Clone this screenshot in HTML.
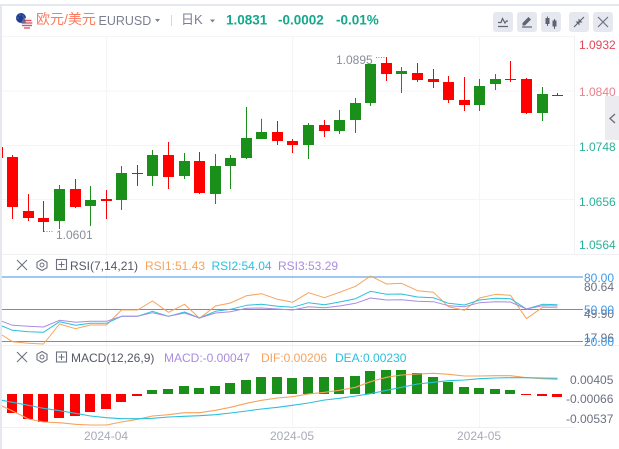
<!DOCTYPE html>
<html><head><meta charset="utf-8"><style>
html,body{margin:0;padding:0;background:#fff;width:619px;height:449px;overflow:hidden}
svg{display:block}
text{font-family:"Liberation Sans","Noto Sans CJK SC",sans-serif;font-size:12px;dominant-baseline:alphabetic}
</style></head><body>
<svg width="619" height="449" viewBox="0 0 619 449" xmlns="http://www.w3.org/2000/svg">
<rect width="619" height="449" fill="#fff"/>
<rect x="0" y="4" width="619" height="2" fill="#e6e8f0"/>
<rect x="0" y="4" width="2" height="445" fill="#e6e8f0"/>
<!-- grid -->
<g stroke="#f5f5f8" stroke-width="1" fill="none">
<path d="M2 36.5H574M2 91H574M2 145.5H574M2 199.5H574"/>
<path d="M106.5 36V427M292.5 36V427M479.5 36V427"/>
</g>
<g stroke="#eff0f4" stroke-width="1" fill="none">
<path d="M574.5 36V254M2 254.5H619M2 345.5H619M2 427.5H574"/>
</g>
<!-- header -->
<circle cx="21" cy="18" r="5" fill="#1c3d96"/>
<g fill="#e8c84a"><circle cx="20" cy="15" r=".5"/><circle cx="23" cy="16" r=".5"/><circle cx="18" cy="18" r=".5"/><circle cx="24" cy="18" r=".5"/></g>
<circle cx="27" cy="23.500" r="5.500" fill="#f3f0f0"/>
<path d="M22.500 20.500H31.500M21.700 23H32.300M22 25.500H32M24 28H30" stroke="#e0505f" stroke-width="1.300" fill="none"/>
<path d="M21.500 23.500A5.500 5.500 0 0 1 25 18.400L26 23Z" fill="#4a5a96" opacity=".8"/>
<text x="36" y="24" font-size="14" style="font-size:14px" fill="#ff7a5c">欧元/美元</text>
<text x="98.500" y="25" style="font-size:12.500px" fill="#7b7f8f">EURUSD</text>
<path d="M155 19h5l-2.500 3z" fill="#7b7f8f"/>
<rect x="171" y="15" width="1" height="11" fill="#d5d7df"/>
<text x="181" y="24" style="font-size:13px" fill="#7b7f8f">日K</text>
<path d="M210 19.500h5l-2.500 3z" fill="#7b7f8f"/>
<text x="226" y="24.500" style="font-size:13.500px;font-weight:bold" fill="#14a88c">1.0831</text>
<text x="278" y="24.500" style="font-size:13.500px;font-weight:bold" fill="#14a88c">-0.0002</text>
<text x="336" y="24.500" style="font-size:13.500px;font-weight:bold" fill="#14a88c">-0.01%</text>
<!-- toolbar -->
<g fill="#e6e8f0"><rect x="493" y="12" width="20" height="20" rx="3"/><rect x="517" y="12" width="20" height="20" rx="3"/><rect x="541" y="12" width="20" height="20" rx="3"/><rect x="569" y="12" width="20" height="20" rx="3"/><rect x="593" y="12" width="20" height="20" rx="3"/></g>
<path d="M498 26.500H508M498 22.500L501 22.500L502.500 18.500L505 23L506.500 21H508" stroke="#5f6372" stroke-width="1.200" fill="none"/>
<path d="M522 27H532" stroke="#5f6372" stroke-width="1.200"/>
<path d="M522.500 25.500V23L528.500 17L531 19.500L525 25.500Z" fill="#5f6372"/>
<path d="M547.500 16.500V26M554.500 19V29" stroke="#5f6372" stroke-width="1"/>
<rect x="545.500" y="18" width="4" height="6" fill="#5f6372"/><rect x="552.500" y="20.500" width="4" height="6" fill="#5f6372"/>
<path d="M574 27L578.500 22.500M584 17L579.500 21.500" stroke="#5f6372" stroke-width="1.200"/>
<path d="M575.500 21.500H579.500V25.500ZM582.500 22.500H578.500V18.500Z" fill="#5f6372"/>
<path d="M598 17L608 27M608 17L598 27" stroke="#6c7080" stroke-width="1.200"/>
<!-- right tab -->
<rect x="605" y="96" width="14" height="44" fill="#ebebf0"/>
<path d="M615 114L610 118.500L615 123" stroke="#6c7080" stroke-width="1.400" fill="none"/>
<!-- candles -->
<path stroke="#f00" stroke-width="1" fill="none" d="M2.500 147V158M12.500 155V219M28.500 194V221M43.500 201V232M75.500 179V208M106.500 190V219M137.500 165V186M168.500 142V189M199.500 152V194M277.500 121V145M292.500 139V153M324.500 120V137M386.500 57V81M417.500 63V82M433.500 69V88M448.500 76V103M464.500 77V111M510.500 61V82M526.500 78V114M557.500 93V96"/>
<path stroke="#1a8f1a" stroke-width="1" fill="none" d="M59.500 185V229M90.500 186V226M121.500 166V210M152.500 150V186M184.500 153V179M215.500 154V204M230.500 155V189M246.500 107V159M261.500 118.700V139M308.500 123V159M339.500 110V134M355.500 98V133M370.500 64V106M401.500 67V93M479.500 79V111M495.500 74V90M542.500 87V121"/>
<path fill="#f00" d="M7 157h11V207H7zM23 211h11v7H23zM38 218h11v4H38zM70 189h11v18H70zM101 199h11v2H101zM132 173h11v1H132zM163 155h11v22H163zM194 161h11v32H194zM272 132h11v9H272zM287 141h11v4H287zM319 125h11v6H319zM381 63h11v11H381zM412 73h11v7H412zM428 79h11v3H428zM443 82h11v18H443zM459 100h11v5H459zM505 79h11v1H505zM521 79h11v34H521zM552 95h11v1H552z"/>
<path fill="#1a8f1a" d="M54 189h11v32H54zM85 200h11v6H85zM116 173h11v27H116zM147 155h11v21H147zM179 161h11v15H179zM210 166h11v28H210zM225 158h11v8H225zM241 138h11v20H241zM256 132h11v7H256zM303 125h11v20H303zM334 120h11v11H334zM350 103h11v17H350zM365 64h11v39H365zM396 71h11v3H396zM474 86h11v19H474zM490 79h11v5H490zM537 94h11v19H537z"/>
<text x="336" y="64" fill="#8a8d9a">1.0895</text>
<path d="M376 57.500H386" stroke="#8a8d9a" stroke-width="1" stroke-dasharray="1 1.500"/>
<text x="56" y="239" fill="#8a8d9a">1.0601</text>
<path d="M44 231.500H54" stroke="#8a8d9a" stroke-width="1" stroke-dasharray="1 1.500"/>
<!-- axis -->
<text x="579" y="49" fill="#e2475a">1.0932</text>
<text x="579" y="96" fill="#e8808c">1.0840</text>
<text x="579" y="151" fill="#2bb09a">1.0748</text>
<text x="579" y="206" fill="#2bb09a">1.0656</text>
<text x="579" y="249" fill="#2bb09a">1.0564</text>
<!-- RSI -->
<path d="M17 260L27 270M27 260L17 270" stroke="#6c7080" stroke-width="1.100" fill="none"/>
<path d="M42 259.500L47 262.300V267.700L42 270.500L37 267.700V262.300Z" stroke="#6c7080" stroke-width="1.100" fill="none"/>
<circle cx="42" cy="265" r="2" stroke="#6c7080" stroke-width="1" fill="none"/>
<rect x="56.500" y="259.500" width="10" height="10" stroke="#6c7080" stroke-width="1.100" fill="none"/>
<path d="M58.500 264.500H64.500M61.500 261.500V267.500" stroke="#6c7080" stroke-width="1"/>
<text x="70" y="270" fill="#555865">RSI(7,14,21)</text>
<text x="145" y="270" fill="#f7a35c">RSI1:51.43</text>
<text x="211.500" y="270" fill="#2bc0dc">RSI2:54.04</text>
<text x="278" y="270" fill="#a98ce0">RSI3:53.29</text>
<path d="M2 277H583" stroke="#7fb6ea" stroke-width="1.500" fill="none"/>
<path d="M2 309.500H583M2 341.500H583" stroke="#4a9ae0" stroke-width="1" fill="none"/>
<g fill="none" stroke-width="1" stroke-linejoin="round">
<polyline stroke="#f7a35c" points="2,335 12.500,341.700 28.500,343.300 43.500,344 59.500,324 75.500,328.700 90.500,325 106.500,325 121.500,310 137.500,310 152.500,301 168.500,312.300 184.500,304.300 199.500,318.300 215.500,306 230.500,303 246.500,295.700 261.500,293.700 277.500,299.300 292.500,302.300 308.500,292.700 324.500,297.700 339.500,292.300 355.500,286.300 370.500,276 386.500,284 401.500,283.300 417.500,290.700 433.500,292.300 448.500,306.700 464.500,310.300 479.500,298 495.500,294.300 510.500,295.300 526.500,318.700 542.500,307.300 557.500,307.700"/>
<polyline stroke="#2bc0dc" points="2,326 12.500,330.300 28.500,331.700 43.500,332.300 59.500,321.700 75.500,325.300 90.500,323.300 106.500,323.300 121.500,316.300 137.500,316.300 152.500,311.300 168.500,316.300 184.500,312 199.500,318 215.500,311.300 230.500,309.300 246.500,305.300 261.500,304.300 277.500,306.300 292.500,307.300 308.500,302.700 324.500,304.700 339.500,302 355.500,298.700 370.500,291.300 386.500,294.300 401.500,294 417.500,297 433.500,297.700 448.500,303.300 464.500,305 479.500,300 495.500,298.300 510.500,298.700 526.500,309 542.500,304.300 557.500,304.700"/>
<polyline stroke="#a98ce0" points="2,321.300 12.500,325.300 28.500,326.300 43.500,327 59.500,320.300 75.500,322.300 90.500,321.300 106.500,321.300 121.500,316.300 137.500,316.300 152.500,312.700 168.500,316.300 184.500,313 199.500,318 215.500,313 230.500,311.700 246.500,308.300 261.500,308 277.500,309 292.500,310 308.500,306.700 324.500,307.700 339.500,306 355.500,303.300 370.500,298 386.500,300 401.500,299.700 417.500,301.300 433.500,301.700 448.500,305.700 464.500,306.700 479.500,302.700 495.500,301.700 510.500,302 526.500,309 542.500,305.700 557.500,306"/>
</g>
<text x="584" y="291" fill="#6c7080">80.64</text>
<text x="584" y="282" fill="#3f9aec">80.00</text>
<text x="584" y="318" fill="#6c7080">49.90</text>
<text x="584" y="314" fill="#3f9aec">50.00</text>
<text x="584" y="342" fill="#6c7080">17.96</text>
<text x="584" y="346" fill="#3f9aec">20.00</text>
<!-- MACD -->
<path d="M17 352L27 362M27 352L17 362" stroke="#6c7080" stroke-width="1.100" fill="none"/>
<path d="M42 351.500L47 354.300V359.700L42 362.500L37 359.700V354.300Z" stroke="#6c7080" stroke-width="1.100" fill="none"/>
<circle cx="42" cy="357" r="2" stroke="#6c7080" stroke-width="1" fill="none"/>
<rect x="56.500" y="352" width="10" height="10" stroke="#6c7080" stroke-width="1.100" fill="none"/>
<path d="M58.500 357H64.500M61.500 354V360" stroke="#6c7080" stroke-width="1"/>
<text x="71" y="362" fill="#555865">MACD(12,26,9)</text>
<text x="164" y="362" fill="#a98ce0">MACD:-0.00047</text>
<text x="261" y="362" fill="#f7a35c">DIF:0.00206</text>
<text x="335" y="362" fill="#2bc0dc">DEA:0.00230</text>
<path fill="#f00" d="M7 394h10v19H7zM23 394h10v25H23zM38 394h10v28H38zM54 394h10v24H54zM70 394h10v22H70zM85 394h10v18H85zM101 394h10v15H101zM116 394h10v8H116zM132 394h10v2H132zM521 394h10v1H521zM537 394h10v2H537zM552 394h10v3H552z"/>
<path fill="#1a8f1a" d="M147 390h10v4H147zM163 389h10v5H163zM179 386h10v8H179zM194 388h10v6H194zM210 386h10v8H210zM225 383h10v11H225zM241 380h10v14H241zM256 377h10v17H256zM272 377h10v17H272zM287 378h10v16H287zM303 377h10v17H303zM319 377h10v17H319zM334 377h10v17H334zM350 376h10v18H350zM365 371h10v23H365zM381 370h10v24H381zM396 370h10v24H396zM412 373h10v21H412zM428 377h10v17H428zM443 382h10v12H443zM459 387h10v7H459zM474 388h10v6H474zM490 389h10v5H490zM505 390h10v4H505z"/>
<g fill="none" stroke-width="1.100" stroke-linejoin="round">
<polyline stroke="#f7a35c" points="2,406 12.500,411 28.500,419 43.500,422 59.500,422.700 75.500,424.300 90.500,425 106.500,425 121.500,422 137.500,419.300 152.500,416 168.500,414.700 184.500,412.700 199.500,412.700 215.500,410.300 230.500,407.300 246.500,403.300 261.500,400.300 277.500,398 292.500,396.700 308.500,394 324.500,392.300 339.500,390.300 355.500,387.300 370.500,381.700 386.500,377.300 401.500,375 417.500,374 433.500,373.300 448.500,374.300 464.500,376 479.500,376 495.500,375.700 510.500,375.700 526.500,377.700 542.500,378.700 557.500,379.300"/>
<polyline stroke="#2bc0dc" points="2,400.300 12.500,402.300 28.500,405.300 43.500,408.300 59.500,410.700 75.500,413.300 90.500,416 106.500,417.700 121.500,418.700 137.500,418.700 152.500,418.300 168.500,417 184.500,416.300 199.500,415.700 215.500,414.700 230.500,413 246.500,411 261.500,409 277.500,407.300 292.500,405.300 308.500,403 324.500,400 339.500,398.300 355.500,396 370.500,393.700 386.500,390.300 401.500,387.300 417.500,384 433.500,382.300 448.500,380.700 464.500,380 479.500,378.700 495.500,378 510.500,377.700 526.500,377.700 542.500,378 557.500,378.300"/>
</g>
<text x="570" y="384" fill="#6c7080">0.00405</text>
<text x="566" y="403" fill="#6c7080">-0.00066</text>
<text x="566" y="423" fill="#6c7080">-0.00537</text>
<text x="84" y="440" fill="#a8abb8">2024-04</text>
<text x="270" y="440" fill="#a8abb8">2024-05</text>
<text x="457" y="440" fill="#a8abb8">2024-05</text>
</svg>
</body></html>
